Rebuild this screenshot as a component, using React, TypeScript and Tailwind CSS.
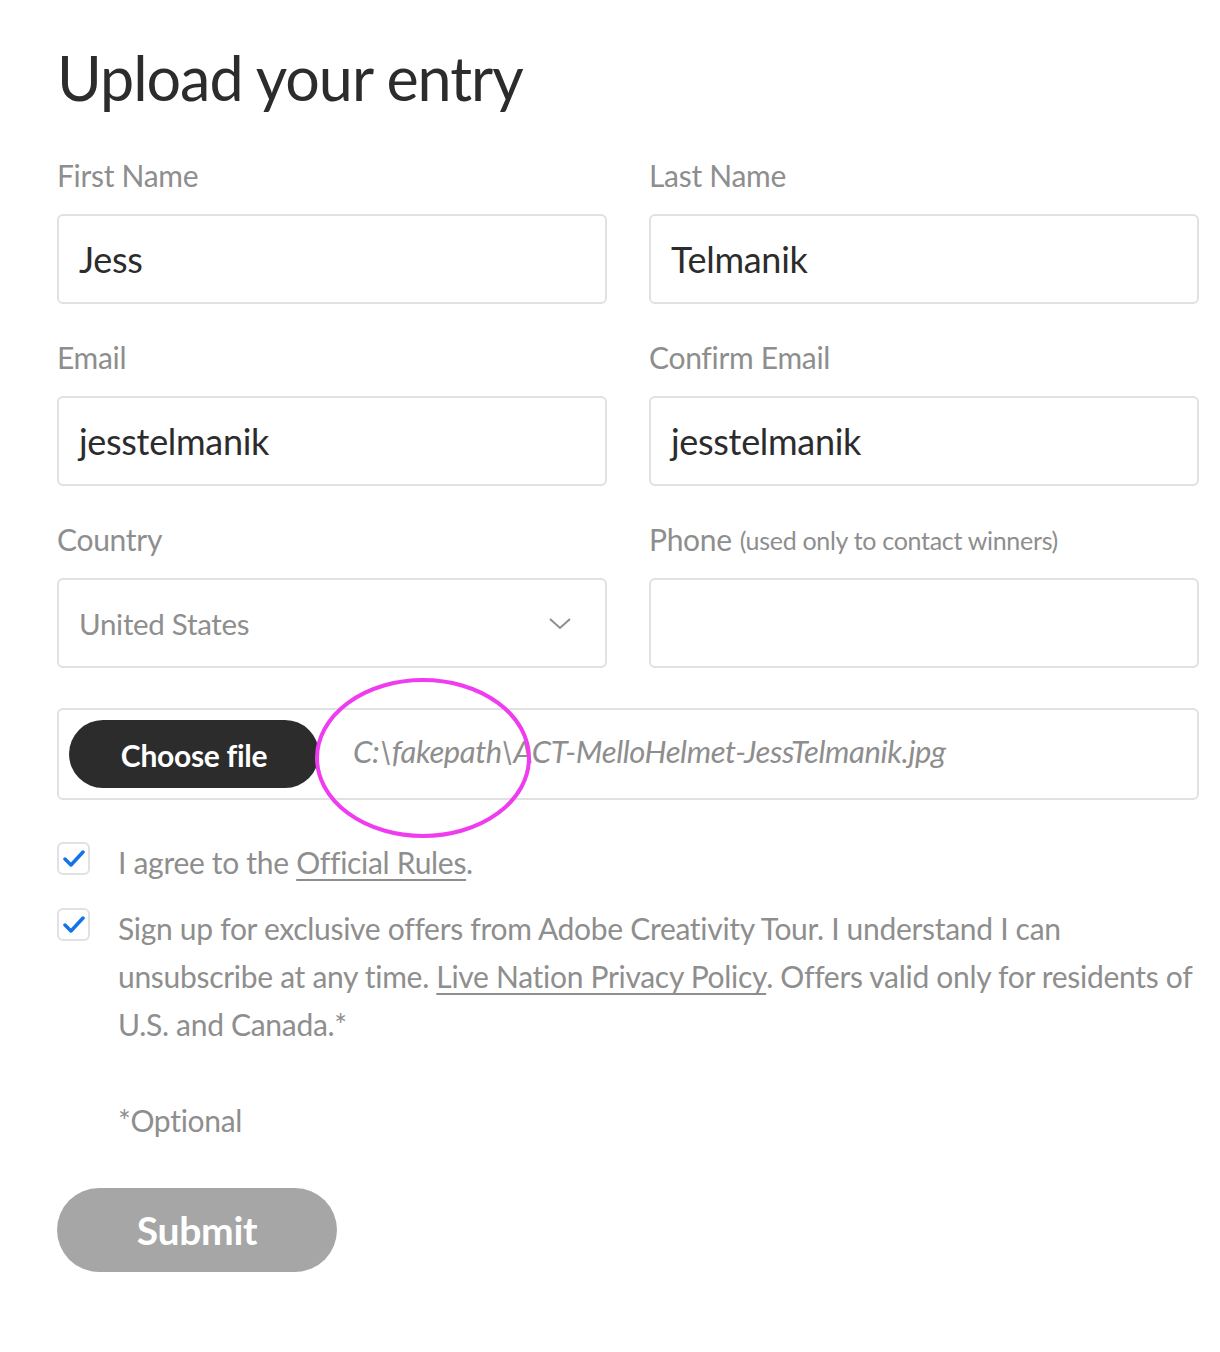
import React from "react";

const font = { fontFamily: "Lato, 'Open Sans', sans-serif" };

function Field({ label, value, extra, select }: { label: string; value?: string; extra?: string; select?: boolean }) {
  return (
    <div className="flex flex-col">
      <div className="h-[40px] flex items-center text-[30px] text-[#8e8e8e] leading-none tracking-[-0.3px]">
        <span>{label}</span>
        {extra && <span className="ml-[8px] text-[25px] mt-[3px]">{extra}</span>}
      </div>
      <div className="mt-[19px] h-[90px] rounded-[6px] border-2 border-[#e1e1e1] flex items-center pl-[20px] pr-[34px] justify-between">
        <span className={select ? "text-[29.5px] text-[#8e8e8e] tracking-[-0.3px] mt-[3px]" : "text-[36px] text-[#2c2c2c] tracking-[-0.3px]"}>{value}</span>
        {select && (
          <svg width="22" height="12" viewBox="0 0 22 12" fill="none" className="mt-[2px]">
            <path d="M1 1 L11 10 L21 1" stroke="#8e8e8e" strokeWidth="2" />
          </svg>
        )}
      </div>
    </div>
  );
}

function Check() {
  return (
    <div className="w-[33px] h-[33px] shrink-0 rounded-[6px] border-2 border-[#e1e1e1] flex items-center justify-center">
      <svg width="22" height="18" viewBox="0 0 22 18" fill="none">
        <path d="M2 9 L8 15 L20 2" stroke="#1473e6" strokeWidth="3.5" strokeLinecap="round" strokeLinejoin="round" />
      </svg>
    </div>
  );
}

export default function App() {
  return (
    <div className="w-[1220px] h-[1352px] bg-white relative" style={font}>
      <div className="pl-[57px] pr-[21px] pt-[38px]">
        <h1 className="text-[61px] leading-[80px] text-[#2c2c2c] tracking-[-1px]">Upload your entry</h1>
        <div className="mt-[37px] grid grid-cols-2 gap-x-[42px] gap-y-[33px]">
          <Field label="First Name" value="Jess" />
          <Field label="Last Name" value="Telmanik" />
          <Field label="Email" value="jesstelmanik" />
          <Field label="Confirm Email" value="jesstelmanik" />
          <Field label="Country" value="United States" select />
          <Field label="Phone" extra="(used only to contact winners)" />
        </div>
        <div className="mt-[40px] h-[92px] rounded-[6px] border-2 border-[#e1e1e1] flex items-center pl-[10px]">
          <div className="w-[250px] h-[68px] rounded-full bg-[#2c2c2c] text-white font-bold text-[30px] flex items-center justify-center tracking-[-0.3px] pt-[2px]">
            Choose file
          </div>
          <span className="ml-[34px] italic text-[31px] text-[#8e8e8e] tracking-[-0.4px] -mt-[6px]">
            C:\fakepath\ACT-MelloHelmet-JessTelmanik.jpg
          </span>
        </div>
        <div className="mt-[42px] flex items-start gap-[28px]">
          <Check />
          <p className="text-[30px] leading-[48px] text-[#8e8e8e] -mt-[4px] tracking-[-0.3px]">
            I agree to the <span className="underline underline-offset-[5px] decoration-[2px]">Official Rules</span>.
          </p>
        </div>
        <div className="mt-[22px] flex items-start gap-[28px]">
          <Check />
          <p className="text-[30px] leading-[48px] text-[#8e8e8e] -mt-[4px] tracking-[-0.3px]">
            Sign up for exclusive offers from Adobe Creativity Tour. I understand I can
            <br />
            unsubscribe at any time. <span className="underline underline-offset-[5px] decoration-[2px]">Live Nation Privacy Policy</span>. Offers valid only for residents of
            <br />
            U.S. and Canada.*
          </p>
        </div>
        <p className="mt-[48px] ml-[61px] text-[30px] leading-[48px] text-[#8e8e8e] tracking-[-0.3px]">*Optional</p>
        <div className="mt-[44px] w-[280px] h-[84px] rounded-full bg-[#a6a6a6] text-white font-bold text-[39px] flex items-center justify-center tracking-[-0.3px]">
          Submit
        </div>
      </div>
      <svg className="absolute left-[312px] top-[676px] pointer-events-none" width="222" height="166" viewBox="0 0 222 166" fill="none">
        <ellipse cx="111" cy="82" rx="106" ry="78" stroke="#f03cf0" strokeWidth="4" />
      </svg>
    </div>
  );
}
